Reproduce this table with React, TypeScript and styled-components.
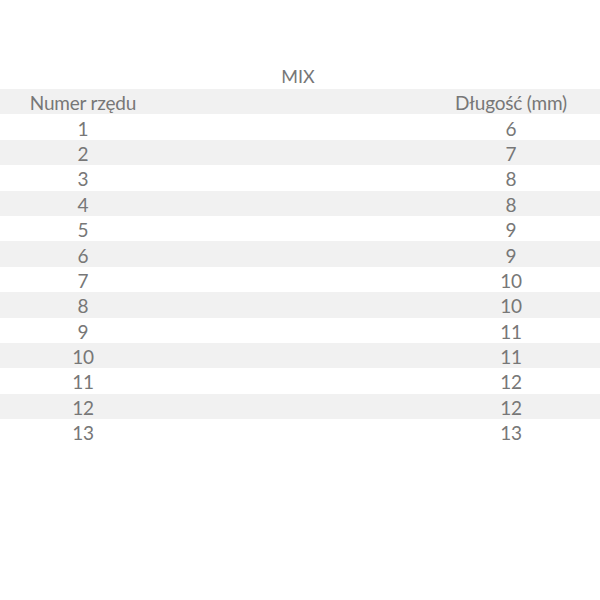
import styled, { createGlobalStyle } from 'styled-components';

const GlobalStyle = createGlobalStyle`
  body {
    margin: 0;
    background: #fff;
    font-family: Lato, "Open Sans", sans-serif;
  }
`;

const Page = styled.div`
  width: 600px;
  height: 600px;
  padding-top: 64px;
  box-sizing: border-box;
`;

const Title = styled.div`
  text-align: center;
  font-size: 18px;
  line-height: 25px;
  color: #777;
  margin-left: -4px;
`;

const Row = styled.div<{ $shaded: boolean }>`
  display: grid;
  grid-template-columns: 166px 1fr 178px;
  height: 25.4px;
  align-items: center;
  padding-top: 2px;
  box-sizing: border-box;
  background: ${(p) => (p.$shaded ? '#f1f1f1' : '#fff')};
  color: #777;
  font-size: 19px;
`;

const Cell = styled.div`
  text-align: center;
  white-space: nowrap;
  letter-spacing: -0.2px;
`;

const rows: [number, number][] = [
  [1, 6], [2, 7], [3, 8], [4, 8], [5, 9], [6, 9], [7, 10],
  [8, 10], [9, 11], [10, 11], [11, 12], [12, 12], [13, 13],
];

export default function App() {
  return (
    <Page>
      <GlobalStyle />
      <Title>MIX</Title>
      <Row $shaded>
        <Cell>Numer rzędu</Cell>
        <div />
        <Cell>Długość (mm)</Cell>
      </Row>
      {rows.map(([n, len], i) => (
        <Row key={n} $shaded={i % 2 === 1}>
          <Cell>{n}</Cell>
          <div />
          <Cell>{len}</Cell>
        </Row>
      ))}
    </Page>
  );
}
